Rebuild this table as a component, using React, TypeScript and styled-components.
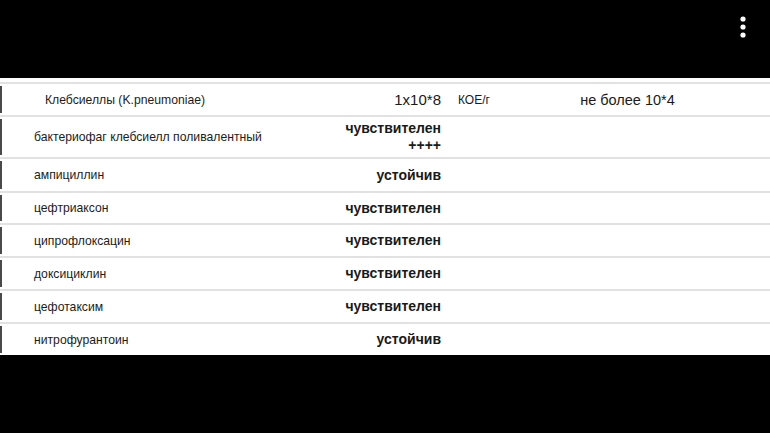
import React from "react";
import styled, { createGlobalStyle } from "styled-components";

const GlobalStyle = createGlobalStyle`
	html, body {
		margin: 0;
		padding: 0;
		background: #000;
	}
`;

const Screen = styled.div`
	width: 770px;
	height: 433px;
	background: #000;
	display: flex;
	flex-direction: column;
	overflow: hidden;
	font-family: "Liberation Sans", Arial, sans-serif;
`;

const TopBar = styled.div`
	height: 78px;
	display: flex;
	justify-content: flex-end;
	align-items: flex-start;
	padding: 14px 22px 0 0;
	box-sizing: border-box;
	flex-shrink: 0;
`;

const MenuButton = styled.div`
	width: 10px;
	height: 26px;
	display: flex;
	align-items: center;
	justify-content: center;
`;

const Sheet = styled.div`
	background: #fff;
	padding-top: 4px;
	display: flex;
	flex-direction: column;
`;

const Row = styled.div<{ $h: number; $first?: boolean; $last?: boolean }>`
	display: grid;
	grid-template-columns: 3px 297px 141px 89px 195px 1fr;
	height: ${(p) => p.$h}px;
	box-sizing: border-box;
	border-top: ${(p) => (p.$first ? "2px solid #e2e2e2" : "none")};
	border-bottom: ${(p) => (p.$last ? "none" : "2px solid #e2e2e2")};
	color: #1a1a1a;
`;

const Marker = styled.div`
	background: #4a4a4a;
	width: 2px;
	margin: 2px 0 2px 0;
`;

const Name = styled.div<{ $indent: number }>`
	padding-left: ${(p) => p.$indent}px;
	font-size: 12.2px;
	display: flex;
	align-items: center;
	white-space: nowrap;
	color: #1c1c1c;
`;

const Value = styled.div<{ $bold?: boolean; $size?: number }>`
	display: flex;
	flex-direction: column;
	justify-content: center;
	align-items: flex-end;
	font-size: ${(p) => p.$size ?? 14}px;
	font-weight: ${(p) => (p.$bold ? 700 : 400)};
	line-height: 17px;
	white-space: nowrap;
`;

const Unit = styled.div`
	padding-left: 17px;
	font-size: 12px;
	display: flex;
	align-items: center;
`;

const Norm = styled.div`
	font-size: 14.5px;
	display: flex;
	align-items: center;
	justify-content: center;
	white-space: nowrap;
`;

const Cell = styled.div``;

const drugs: { name: string; value: string; h: number }[] = [
	{ name: "ампициллин", value: "устойчив", h: 34 },
	{ name: "цефтриаксон", value: "чувствителен", h: 32 },
	{ name: "ципрофлоксацин", value: "чувствителен", h: 33 },
	{ name: "доксициклин", value: "чувствителен", h: 33 },
	{ name: "цефотаксим", value: "чувствителен", h: 33 },
	{ name: "нитрофурантоин", value: "устойчив", h: 31 },
];

export default function App() {
	return (
		<Screen>
			<GlobalStyle />
			<TopBar>
				<MenuButton>
					<svg width="8" height="24" viewBox="0 0 8 24">
						<circle cx="4" cy="4" r="2.6" fill="#fff" />
						<circle cx="4" cy="12" r="2.6" fill="#fff" />
						<circle cx="4" cy="20" r="2.6" fill="#fff" />
					</svg>
				</MenuButton>
			</TopBar>
			<Sheet>
				<Row $h={35} $first>
					<Marker />
					<Name $indent={42}>Клебсиеллы (K.pneumoniae)</Name>
					<Value $size={15}>1x10*8</Value>
					<Unit>КОЕ/г</Unit>
					<Norm>не более 10*4</Norm>
					<Cell />
				</Row>
				<Row $h={42}>
					<Marker />
					<Name $indent={31}>бактериофаг клебсиелл поливалентный</Name>
					<Value $bold>
						<span>чувствителен</span>
						<span>++++</span>
					</Value>
					<Unit />
					<Norm />
					<Cell />
				</Row>
				{drugs.map((d, i) => (
					<Row key={d.name} $h={d.h} $last={i === drugs.length - 1}>
						<Marker />
						<Name $indent={31}>{d.name}</Name>
						<Value $bold>{d.value}</Value>
						<Unit />
						<Norm />
						<Cell />
					</Row>
				))}
			</Sheet>
		</Screen>
	);
}
